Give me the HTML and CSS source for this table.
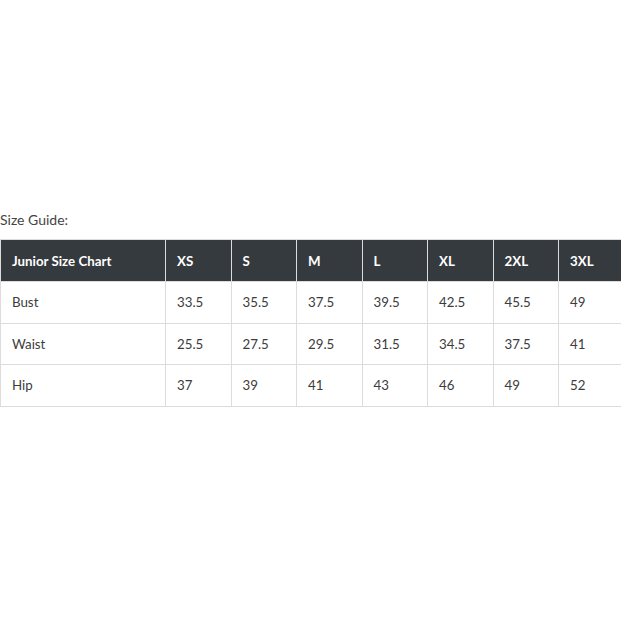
FILE: index.html
```html
<!DOCTYPE html>
<html>
<head>
<meta charset="utf-8">
<link rel="stylesheet" href="styles.css">
</head>
<body>
<div class="page">
  <p class="label">Size Guide:</p>
  <table class="chart">
    <thead>
      <tr>
        <th class="first">Junior Size Chart</th>
        <th>XS</th><th>S</th><th>M</th><th>L</th><th>XL</th><th>2XL</th><th>3XL</th>
      </tr>
    </thead>
    <tbody>
      <tr><td>Bust</td><td>33.5</td><td>35.5</td><td>37.5</td><td>39.5</td><td>42.5</td><td>45.5</td><td>49</td></tr>
      <tr><td>Waist</td><td>25.5</td><td>27.5</td><td>29.5</td><td>31.5</td><td>34.5</td><td>37.5</td><td>41</td></tr>
      <tr><td>Hip</td><td>37</td><td>39</td><td>41</td><td>43</td><td>46</td><td>49</td><td>52</td></tr>
    </tbody>
  </table>
</div>
</body>
</html>
```
FILE: styles.css
```css
html, body {
  margin: 0;
  padding: 0;
  background: #fff;
}
.page {
  padding-top: 210px;
  font-family: Lato, "Open Sans", sans-serif;
  color: #3a3a3a;
}
.label {
  margin: 0 0 9px 0;
  font-size: 14px;
  line-height: 20px;
  color: #444;
}
.chart {
  border-collapse: collapse;
  width: 621px;
  table-layout: fixed;
  font-size: 13.3px;
}
.chart th, .chart td {
  border: 1px solid #dcdcdc;
  height: 41.5px;
  padding: 0 0 0 11px;
  text-align: left;
  vertical-align: middle;
  box-sizing: border-box;
}
.chart th {
  height: 42px;
  background: #353a3e;
  color: #fff;
  font-weight: 700;
  width: 65.5px;
}
.chart th.first {
  width: 165px;
}
.chart td {
  color: #3c3c3c;
}
```
